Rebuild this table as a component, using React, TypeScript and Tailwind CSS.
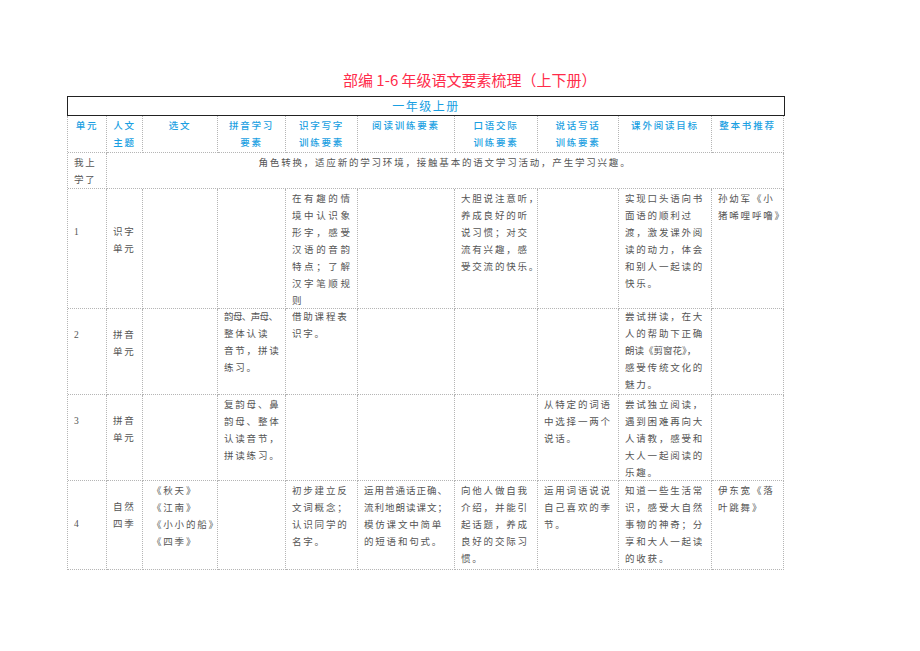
const body = "font-['Liberation_Serif','Noto_Sans_CJK_SC',serif]";

// line prefixes: "!" = squeezed tight, "~" = no extra spacing, "^" = light spacing
function lineStyle(l: string) {
  if (l.startsWith("!")) return "tracking-[-0.6px]";
  if (l.startsWith("~")) return "tracking-[0px]";
  if (l.startsWith("^")) return "tracking-[1px]";
  return "";
}

function Cell({ lines, className = "" }: { lines?: string[]; className?: string }) {
  return (
    <div className={`border-r border-b border-dotted border-[#b5b5b5] pl-[6px] pr-[2px] ${className}`}>
      {lines?.map((l, i) => (
        <div key={i} className={`whitespace-nowrap ${lineStyle(l)}`}>
          {l.replace(/^[!~^]/, "")}
        </div>
      ))}
    </div>
  );
}

function Head({ lines }: { lines: string[] }) {
  return (
    <div className="border-r border-b border-dotted border-[#b5b5b5] text-center text-[#1a9fe2] font-medium pt-[1px]">
      {lines.map((l, i) => (
        <div key={i}>{l}</div>
      ))}
    </div>
  );
}

type Row = { num: string; numPt: string; theme: string[]; themePt: string; cells: string[][]; pt: string };

const rows: Row[] = [
  {
    num: "1",
    numPt: "pt-[35px]",
    theme: ["识字", "单元"],
    themePt: "pt-[35px]",
    pt: "pt-[1.5px]",
    cells: [
      [],
      [],
      ["在有趣的情", "境中认识象", "形字，感受", "汉语的音韵", "特点；了解", "汉字笔顺规", "则"],
      [],
      ["大胆说注意听，", "养成良好的听", "说习惯；对交", "流有兴趣，感", "受交流的快乐。"],
      [],
      ["实现口头语向书", "面语的顺利过", "渡，激发课外阅", "读的动力，体会", "和别人一起读的", "快乐。"],
      ["孙幼军《小", "猪唏哩呼噜》"],
    ],
  },
  {
    num: "2",
    numPt: "pt-[18px]",
    theme: ["拼音", "单元"],
    themePt: "pt-[18px]",
    pt: "pt-0",
    cells: [
      [],
      ["!韵母、声母、", "整体认读", "音节，拼读", "练习。"],
      ["借助课程表", "识字。"],
      [],
      [],
      [],
      ["尝试拼读，在大", "人的帮助下正确", "~朗读《剪窗花》，", "感受传统文化的", "魅力。"],
      [],
    ],
  },
  {
    num: "3",
    numPt: "pt-[18px]",
    theme: ["拼音", "单元"],
    themePt: "pt-[18px]",
    pt: "pt-[1.5px]",
    cells: [
      [],
      ["复韵母、鼻", "韵母、整体", "认读音节，", "拼读练习。"],
      [],
      [],
      [],
      ["从特定的词语", "中选择一两个", "说话。"],
      ["尝试独立阅读，", "遇到困难再向大", "人请教，感受和", "大人一起阅读的", "乐趣。"],
      [],
    ],
  },
  {
    num: "4",
    numPt: "pt-[35px]",
    theme: ["自然", "四季"],
    themePt: "pt-[18px]",
    pt: "pt-[2px]",
    cells: [
      ["《秋天》", "《江南》", "《小小的船》", "《四季》"],
      [],
      ["初步建立反", "文词概念；", "认识同学的", "名字。"],
      ["^运用普通话正确、", "^流利地朗读课文；", "模仿课文中简单", "的短语和句式。"],
      ["向他人做自我", "介绍，并能引", "起话题，养成", "良好的交际习", "惯。"],
      ["运用词语说说", "自己喜欢的季", "节。"],
      ["知道一些生活常", "识，感受大自然", "事物的神奇；分", "享和大人一起读", "的收获。"],
      ["伊东宽《落", "叶跳舞》"],
    ],
  },
];

export default function App() {
  return (
    <div className="w-[920px] h-[651px] bg-white">
      <div className="pt-[70px] pl-[343px] h-[96px]">
        <h1 className="text-[15px] leading-[20px] text-[#ff2b4a] font-['Noto_Sans_CJK_SC',sans-serif] whitespace-nowrap">
          部编 1-6 年级语文要素梳理（上下册）
        </h1>
      </div>

      <div className="ml-[67px] w-[718px]">
        <div className="h-[20px] border border-[#222] flex items-center justify-center text-[12px] text-[#1a9fe2] tracking-[1.5px] font-['Noto_Sans_CJK_SC',sans-serif]">
          一年级上册
        </div>

        <div
          className={`grid grid-cols-[39px_36px_75px_68px_72px_97px_83px_81px_93px_72px] grid-rows-[37px_36px_120px_86px_86px_89px] border-l border-dotted border-[#b5b5b5] text-[9.5px] leading-[17px] tracking-[1.8px] ${body}`}
        >
          {/* header */}
          <div className="contents font-['Noto_Sans_CJK_SC',sans-serif]">
            <Head lines={["单元"]} />
            <Head lines={["人文", "主题"]} />
            <Head lines={["选文"]} />
            <Head lines={["拼音学习", "要素"]} />
            <Head lines={["识字写字", "训练要素"]} />
            <Head lines={["阅读训练要素"]} />
            <Head lines={["口语交际", "训练要素"]} />
            <Head lines={["说话写话", "训练要素"]} />
            <Head lines={["课外阅读目标"]} />
            <Head lines={["整本书推荐"]} />
          </div>

          {/* 我上学了 */}
          <Cell lines={["我上", "学了"]} className="pt-[1.5px] text-[#555]" />
          <div className="col-span-9 border-r border-b border-dotted border-[#b5b5b5] pt-[1.5px] text-center text-[#555]">
            角色转换，适应新的学习环境，接触基本的语文学习活动，产生学习兴趣。
          </div>

          {rows.map((r) => (
            <div key={r.num} className="contents text-[#555]">
              <Cell lines={[r.num]} className={r.numPt} />
              <Cell lines={r.theme} className={r.themePt} />
              {r.cells.map((c, i) => (
                <Cell
                  key={i}
                  lines={c}
                  className={`${r.pt} ${i === 0 ? "pl-[9px]" : ""} ${r.num === "1" && i === 2 ? "tracking-[2.6px]" : ""}`}
                />
              ))}
            </div>
          ))}
        </div>
      </div>
    </div>
  );
}
